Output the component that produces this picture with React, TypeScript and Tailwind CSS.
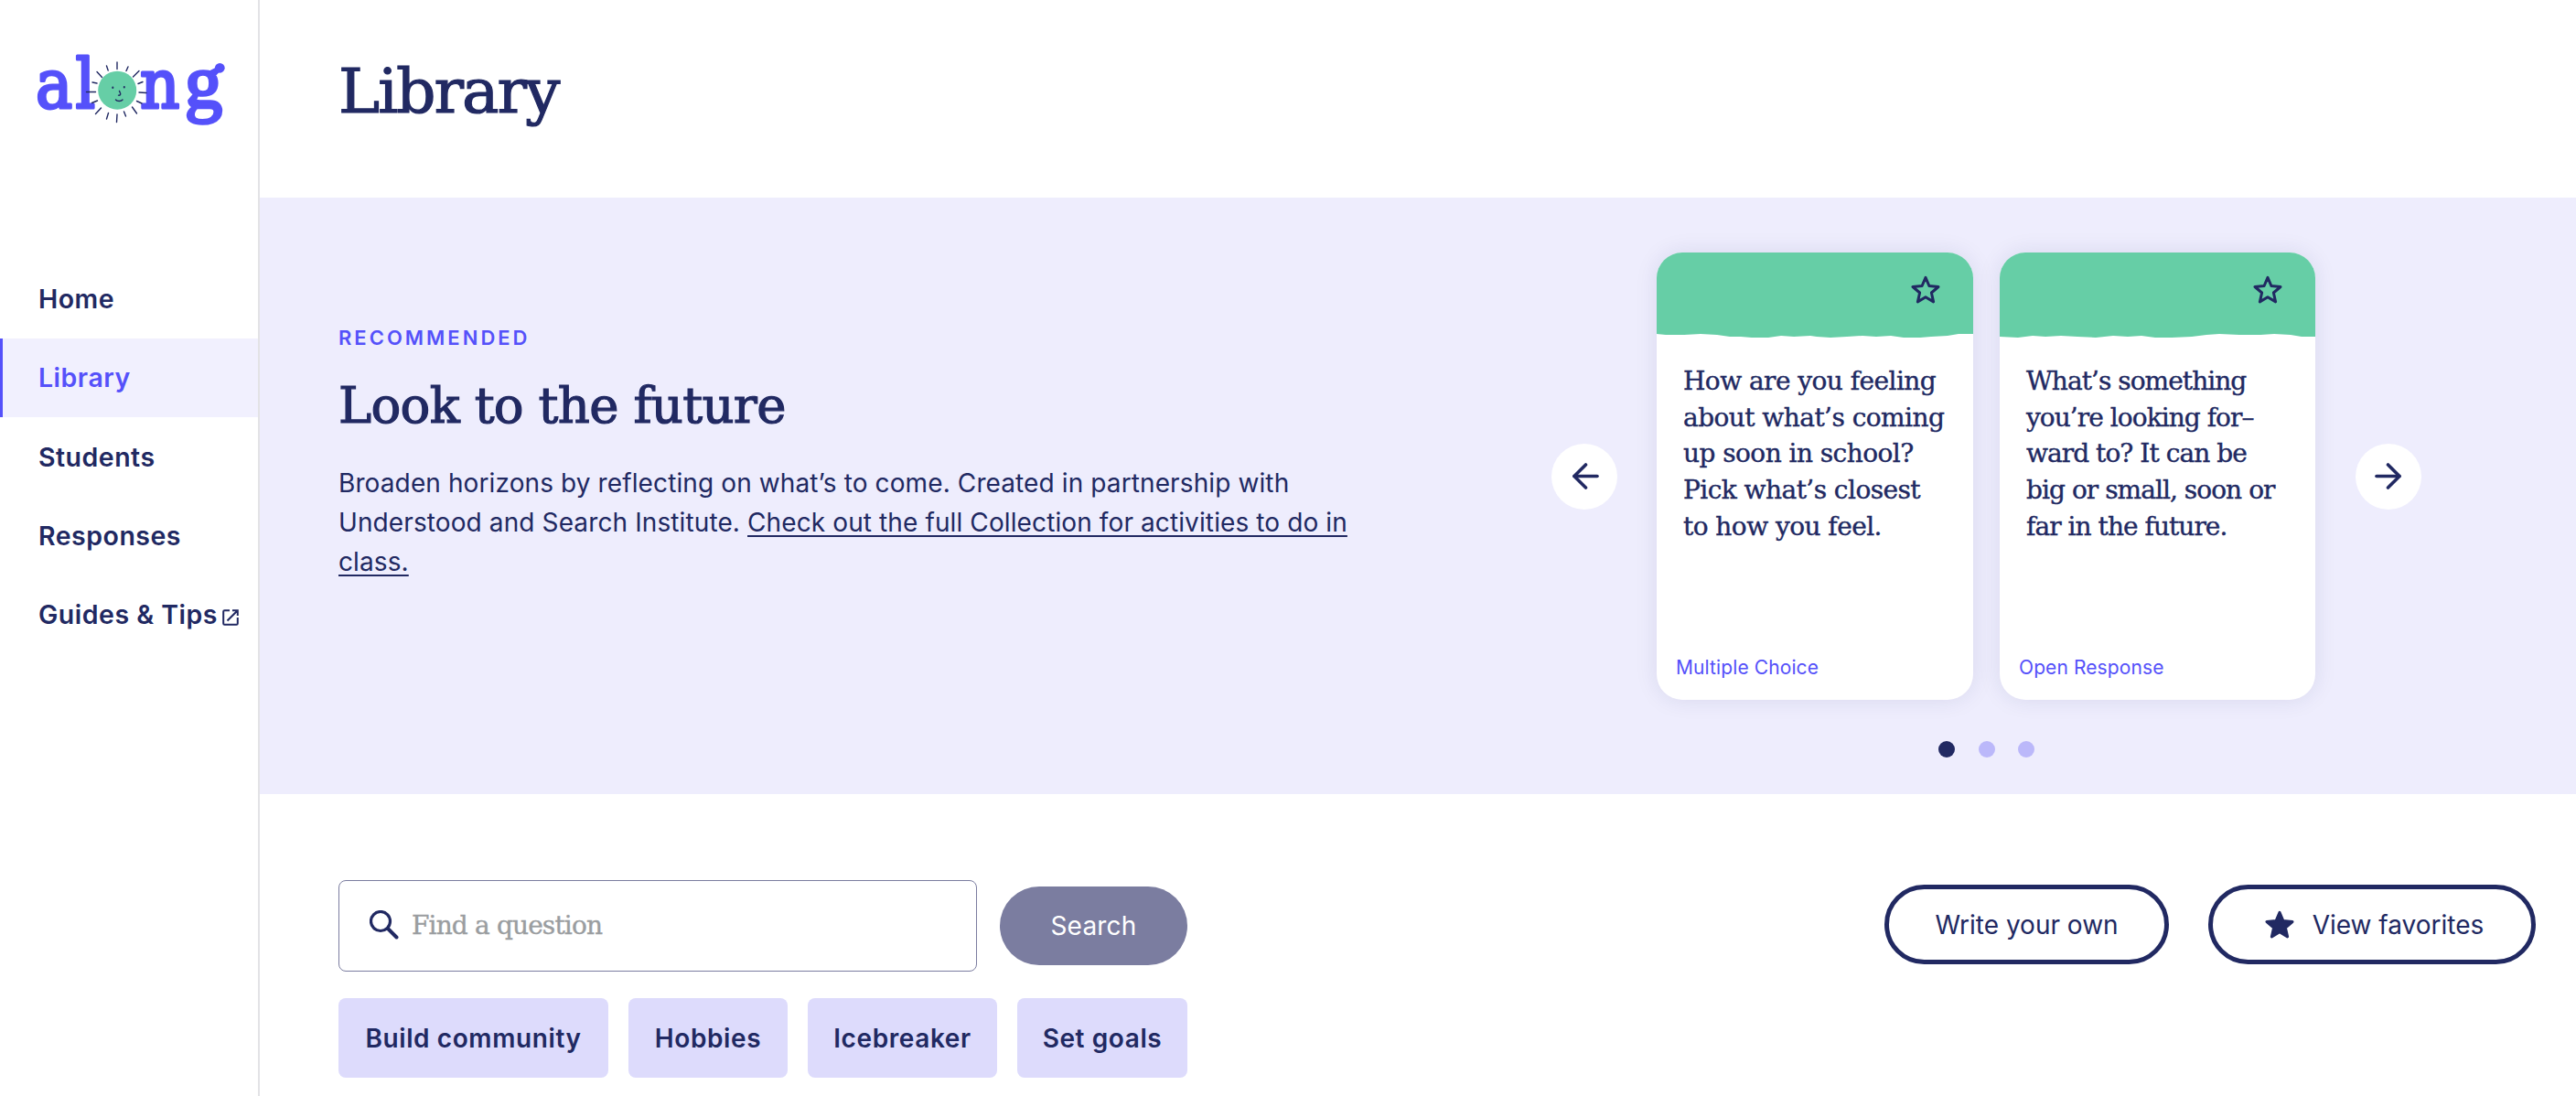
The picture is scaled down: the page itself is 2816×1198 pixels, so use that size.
import { ArrowLeft, ArrowRight } from "lucide-react";
import clsx from "clsx";

const serif = "font-['DejaVu_Serif',serif] [-webkit-text-stroke:0.4px_currentColor]";
const serifHeading = "font-['DejaVu_Serif',serif] [-webkit-text-stroke:1.2px_currentColor]";

const NAV = ["Home", "Library", "Students", "Responses", "Guides & Tips"];

const CARDS = [
  {
    lines: ["How are you feeling", "about what’s coming", "up soon in school?", "Pick what’s closest", "to how you feel."],
    kind: "Multiple Choice",
    width: "w-[346px]",
    tracking: "tracking-[-0.55px]",
    edge: "M0 0H346V89L330 89 318 91 300 92 288 93H270L256 91 240 92 225 91 208 92 190 93 175 92 168 91 150 92 136 91 122 93H104L92 92 80 92 66 90 48 89 30 90 10 90 0 89Z",
  },
  {
    lines: ["What’s something", "you’re looking for–", "ward to? It can be", "big or small, soon or", "far in the future."],
    kind: "Open Response",
    width: "w-[345px]",
    tracking: "tracking-[-0.95px]",
    edge: "M0 0H345V92L330 92 318 90 300 89 285 90 262 90 240 89 226 90 210 92 188 93H170L155 91 140 92 124 91 105 93 85 92 67 91 50 92 36 91 20 93 0 92Z",
  },
];

const TAGS = [
  { label: "Build community", width: "w-[295px]" },
  { label: "Hobbies", width: "w-[174px]" },
  { label: "Icebreaker", width: "w-[207px]" },
  { label: "Set goals", width: "w-[186px]" },
];

const STAR = "M16 2.3 19.9 11.5 30 12.5 22.4 19 24.6 28.9 16 23.8 7.4 28.9 9.6 19 2 12.5 12.1 11.5Z";

function Logo() {
  return (
    <svg viewBox="0 0 282 180" className="w-[282px] h-[180px]" aria-label="along">
      <g fill="#5551fa" stroke="#5551fa" strokeWidth="3" strokeLinejoin="round" className="font-['DejaVu_Serif_Condensed','DejaVu_Serif',serif] [font-stretch:condensed] text-[75px]">
        <text x="39" y="117.5">a</text>
        <text x="82.5" y="117.5">l</text>
        <text x="153" y="117.5">n</text>
      </g>
      <text x="202" y="117" fill="#5551fa" stroke="#5551fa" strokeWidth="3.500" strokeLinejoin="round" className="font-['Liberation_Serif',serif] text-[82px]">g</text>
      <circle cx="240.3" cy="74.3" r="5.4" fill="#5551fa" />
      <circle cx="128.2" cy="98.7" r="21" fill="#66cea6" />
      <g stroke="#212962" strokeWidth="1.4" strokeLinecap="round" fill="none">
        <path d="M128 68v7.5M116.500 72l1.700 5M140 73l-2 4.500M106 78.500l5.500 6M152 77.500l-6.500 6.500M101 90l5 1M156 89.500l-5 2M94.500 100.500h10M152 101l8 .500M100.500 112.500l6-2.500M149.500 110.500l5.500 2.500M104.500 124.500l6-6.500M144.500 117l5 7M116.500 130l2-6.500M135.500 122l2 5M127.500 133.500l.500-8.500" />
        <path d="M123.300 95.500v.600M135.800 95v.600" strokeWidth="2" />
        <path d="M130.500 99.500c.500 1.500 1.500 2.500 1.200 3.500s-1.200 1.500-2.200 1.200M126.500 109c1.500 2 6 2 7.500 0" />
      </g>
    </svg>
  );
}

function Star({ filled }: { filled?: boolean }) {
  return (
    <svg viewBox="0 0 32 32" className="w-8 h-8" fill={filled ? "#212962" : "none"} stroke="#212962" strokeWidth="3" strokeLinejoin="round">
      <path d={STAR} />
    </svg>
  );
}

function Sidebar() {
  return (
    <aside className="w-[284px] shrink-0 border-r-2 border-[#e3e3e6]">
      <div className="h-[284px]">
        <Logo />
      </div>
      <nav>
        {NAV.map((item) => (
          <a
            key={item}
            className={clsx(
              "flex items-center h-[86.2px] border-l-[3px] pl-[39px] pt-px font-semibold text-[28.5px] tracking-[0.5px] whitespace-nowrap",
              item === "Library" ? "border-[#5551fa] bg-[#f1f0fe] text-[#5551fa]" : "border-transparent"
            )}
          >
            {item}
            {item === "Guides & Tips" && (
              <svg viewBox="0 0 18 18" className="w-[18px] h-[18px] ml-[5px] mt-[5px]" fill="none" stroke="#212962" strokeWidth="2">
                <path d="M8 1.200H2.500Q1.200 1.200 1.200 2.500V15.500Q1.200 16.800 2.500 16.800H15.500Q16.800 16.800 16.800 15.500V9M11 1.200H16.800V7M16.500 1.500 5.500 12.500" />
              </svg>
            )}
          </a>
        ))}
      </nav>
    </aside>
  );
}

function Recommended() {
  return (
    <section className="h-[652px] flex justify-between bg-[#eeedfd] pl-[86px] pr-[169px]">
      <div className="w-[1130px] pt-[137px]">
        <p className="text-[22px] leading-8 font-semibold tracking-[3px] text-[#5551fa]">RECOMMENDED</p>
        <h2 className={clsx(serifHeading, "mt-[23px] text-[54.5px] leading-[70px] tracking-[-0.7px]")}>Look to the future</h2>
        <p className="mt-[29px] leading-[43px] tracking-[0.11px]">
          Broaden horizons by reflecting on what’s to come. Created in partnership with
          <br />
          Understood and Search Institute.{" "}
          <a className="underline decoration-2 underline-offset-[4px]">
            Check out the full Collection for activities to do in
            <br />
            class.
          </a>
        </p>
      </div>

      <div className="pt-[60px]">
        <div className="flex items-center">
          <button className="w-[72px] h-[72px] rounded-full bg-white flex items-center justify-center pl-[2px]">
            <ArrowLeft size={43} strokeWidth={2} />
          </button>
          <div className="flex gap-[29px] ml-[43px] mr-[44px]">
            {CARDS.map((card) => (
              <article key={card.kind} className={clsx("h-[489px] rounded-[28px] bg-white overflow-hidden flex flex-col shadow-[0_0_24px_rgba(32,39,99,0.1)]", card.width)}>
                <div className="relative h-[121px]">
                  <svg viewBox="0 0 346 93" className="block w-[346px] h-[93px]" fill="#66cea6">
                    <path d={card.edge} />
                  </svg>
                  <button className="absolute top-[25px] right-[36px]">
                    <Star />
                  </button>
                </div>
                <p className={clsx(serif, "pl-[29px] text-[28px] leading-[39.7px] whitespace-nowrap", card.tracking)}>
                  {card.lines.map((line) => (
                    <span key={line} className="block">{line}</span>
                  ))}
                </p>
                <p className="mt-auto mb-5 pl-[21px] text-[21px] leading-[30px] tracking-[0.1px] text-[#5551fa]">{card.kind}</p>
              </article>
            ))}
          </div>
          <button className="w-[72px] h-[72px] rounded-full bg-white flex items-center justify-center pr-[2px]">
            <ArrowRight size={43} strokeWidth={2} />
          </button>
        </div>
        <div className="flex justify-center gap-[25.500px] mt-[45px]">
          <span className="w-[18px] h-[18px] rounded-full bg-[#212962]" />
          <span className="w-[18px] h-[18px] rounded-full bg-[#bbb8fa]" />
          <span className="w-[18px] h-[18px] rounded-full bg-[#bbb8fa]" />
        </div>
      </div>
    </section>
  );
}

function SearchArea() {
  return (
    <section className="pt-[94px] pl-[86px] pr-[44px]">
      <div className="flex items-center">
        <div className="w-[698px] h-[100px] rounded-lg border border-[#7b7da0] flex items-center pl-[33px]">
          <svg viewBox="0 0 32 32" className="w-8 h-8 -mt-[3px]" fill="none" stroke="#212962">
            <circle cx="12" cy="12" r="10.500" strokeWidth="3.200" />
            <path d="M20.500 20.500 29.500 29.500" strokeWidth="4" strokeLinecap="round" />
          </svg>
          <span className={clsx(serif, "ml-[14px] text-[28px] leading-10 tracking-[-0.85px] text-[#9a9da0]")}>Find a question</span>
        </div>
        <button className="ml-[25px] w-[205px] h-[86px] rounded-full bg-[#7b7da0] text-white tracking-[0.2px]">Search</button>
        <button className="ml-auto -mt-[3px] w-[311px] h-[87px] rounded-full border-[5px] border-[#212962]">Write your own</button>
        <button className="ml-[43px] -mt-[3px] w-[358px] h-[87px] rounded-full border-[5px] border-[#212962] flex items-center justify-center gap-[20px] pl-[5px]">
          <Star filled />
          View favorites
        </button>
      </div>
      <div className="flex gap-[22px] mt-[29px]">
        {TAGS.map((tag) => (
          <button key={tag.label} className={clsx("h-[87px] rounded-lg bg-[#dddbfc] font-semibold tracking-[0.6px]", tag.width)}>
            {tag.label}
          </button>
        ))}
      </div>
    </section>
  );
}

export default function App() {
  return (
    <div className="flex h-[1198px] overflow-hidden bg-white text-[#212962] text-[28px] font-['Inter',sans-serif]">
      <Sidebar />
      <main className="flex-1">
        <header className="h-[216px] pt-[60px] pl-[86px]">
          <h1 className={clsx(serifHeading, "text-[68px] leading-[80px] tracking-[-2px]")}>Library</h1>
        </header>
        <Recommended />
        <SearchArea />
      </main>
    </div>
  );
}
